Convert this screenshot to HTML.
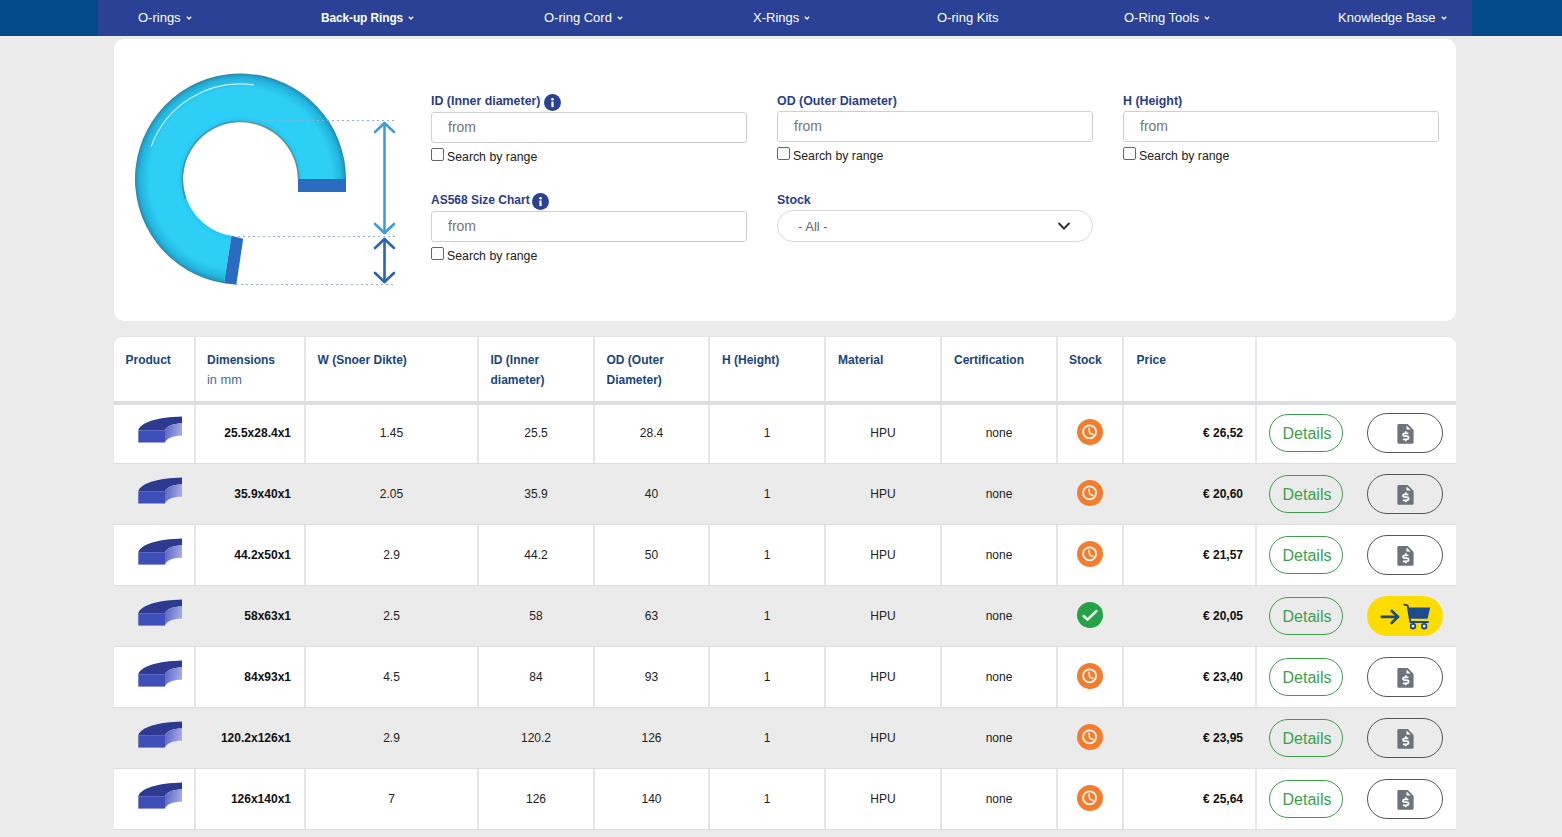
<!DOCTYPE html>
<html><head><meta charset="utf-8">
<style>
*{box-sizing:border-box;margin:0;padding:0}
html,body{width:1562px;height:837px;overflow:hidden;background:#ebebeb;font-family:"Liberation Sans",sans-serif;position:relative}
.abs{position:absolute}
#nav{position:absolute;left:0;top:0;width:1562px;height:36px;background:#044a8a}
#navin{position:absolute;left:98px;top:0;width:1374px;height:36px;background:#2a4196}
.ni{position:absolute;top:10px;color:#fff;font-size:13px;line-height:15px;white-space:nowrap}
.ni.b{font-weight:bold;letter-spacing:-0.1px}
.sx{display:inline-block;transform:scaleX(0.915);transform-origin:0 50%}
.chev{display:inline-block;width:6px;height:4px;margin-left:5px;vertical-align:2px}
#panel{position:absolute;left:114px;top:39px;width:1342px;height:282px;background:#fff;border-radius:10px}
.lbl{position:absolute;color:#283d8c;font-weight:bold;font-size:12.4px;line-height:14px;white-space:nowrap}
.info{position:absolute;width:17px;height:17px;border-radius:50%;background:#2a4196}
.inp{position:absolute;height:31px;width:316px;border:1px solid #cfcfcf;border-radius:3px;background:#fff}
.ph{position:absolute;left:16px;top:6px;color:#757575;font-size:14px;line-height:16px}
.cb{position:absolute;width:13px;height:13px;border:1px solid #666;border-radius:2px;background:#fff}
.sbr{position:absolute;color:#222;font-size:12.3px;line-height:14px;white-space:nowrap}
#sel{position:absolute;left:777px;top:210px;width:316px;height:32px;border:1px solid #d9d9d9;border-radius:16px;background:#fff}
#table{position:absolute;left:114px;top:337px;width:1342px;height:493px;background:#fff;border-radius:8px 8px 0 0;overflow:hidden;box-shadow:0 -1px 0 #e2e2e2}
.th{position:absolute;color:#17467f;font-weight:bold;font-size:12px;line-height:20px;white-space:nowrap}
.vl{position:absolute;width:2px;background:#e6e6e6}
.row{position:absolute;left:0;width:1342px;height:61px}
.row.alt{background:#ebebeb}
.td{position:absolute;color:#222;font-size:12px;line-height:14px;white-space:nowrap;text-align:center}
.tdb{position:absolute;color:#111;font-weight:bold;font-size:12px;line-height:14px;white-space:nowrap;text-align:right}
.det{position:absolute;width:74px;height:38px;border:1px solid #3b9e4b;border-radius:19px;color:#3aa24c;font-size:16px;line-height:38px;text-align:center;text-indent:2px}
.quo{position:absolute;width:76px;height:40px;border:1px solid #555;border-radius:20px}
.cart{position:absolute;width:76px;height:40px;border-radius:20px;background:#fddc00}
.clk{position:absolute;width:26px;height:26px;border-radius:50%;background:#f47c2e}
.chk{position:absolute;width:26px;height:26px;border-radius:50%;background:#25a146}
</style></head><body>
<div id="nav"><div id="navin"></div></div>
<div class="ni" style="left:138px">O-rings<svg class="chev" viewBox="0 0 6 4"><path d="M0.8,0.8 L3,3 L5.2,0.8" fill="none" stroke="#fff" stroke-width="1.25"/></svg></div>
<div class="ni b" style="left:321px"><span class="sx">Back-up Rings</span></div>
<div class="ni" style="left:403px"><svg class="chev" viewBox="0 0 6 4"><path d="M0.8,0.8 L3,3 L5.2,0.8" fill="none" stroke="#fff" stroke-width="1.25"/></svg></div>
<div class="ni" style="left:544px">O-ring Cord<svg class="chev" viewBox="0 0 6 4"><path d="M0.8,0.8 L3,3 L5.2,0.8" fill="none" stroke="#fff" stroke-width="1.25"/></svg></div>
<div class="ni" style="left:753px">X-Rings<svg class="chev" viewBox="0 0 6 4"><path d="M0.8,0.8 L3,3 L5.2,0.8" fill="none" stroke="#fff" stroke-width="1.25"/></svg></div>
<div class="ni" style="left:937px">O-ring Kits</div>
<div class="ni" style="left:1124px">O-Ring Tools<svg class="chev" viewBox="0 0 6 4"><path d="M0.8,0.8 L3,3 L5.2,0.8" fill="none" stroke="#fff" stroke-width="1.25"/></svg></div>
<div class="ni" style="left:1338px">Knowledge Base<svg class="chev" viewBox="0 0 6 4"><path d="M0.8,0.8 L3,3 L5.2,0.8" fill="none" stroke="#fff" stroke-width="1.25"/></svg></div>
<div id="panel"></div>
<svg class="abs" style="left:0;top:0" width="420" height="320" viewBox="0 0 420 320">
<defs>
<radialGradient id="rg" cx="240.5" cy="179" r="105.5" gradientUnits="userSpaceOnUse">
<stop offset="0.545" stop-color="#28c4ee"/>
<stop offset="0.60" stop-color="#2ccff6"/>
<stop offset="0.86" stop-color="#2ecff5"/>
<stop offset="0.95" stop-color="#23b6df"/>
<stop offset="0.985" stop-color="#1d9cc6"/>
<stop offset="1" stop-color="#3a7d96"/>
</radialGradient>
</defs>
<path d="M346,179 A105.5,105.5 0 1,0 224,283.2 L231.5,235.8 A57.5,57.5 0 1,1 298,179 Z" fill="url(#rg)"/>
<path d="M151.2,146.5 A95,95 0 0,1 253.7,84.9" fill="none" stroke="#d8f6fd" stroke-width="1.1" opacity="0.9"/>
<path d="M185.5,199 A58.2,58.2 0 1,1 298.6,179" fill="none" stroke="#4f7f92" stroke-width="1.6" opacity="0.75"/>
<rect x="298" y="179" width="48" height="13" fill="#2a6cc0"/>
<polygon points="231.5,235.8 224,283.2 236.3,284.8 243.2,238.7" fill="#2a6cc0"/>
<line x1="262" y1="120.5" x2="395" y2="120.5" stroke="#8fb0cc" stroke-width="1" stroke-dasharray="2,3"/>
<line x1="238" y1="236.5" x2="395" y2="236.5" stroke="#8fb0cc" stroke-width="1" stroke-dasharray="2,3"/>
<line x1="236" y1="284.5" x2="395" y2="284.5" stroke="#8fb0cc" stroke-width="1" stroke-dasharray="2,3"/>
<g fill="none" stroke="#3b9de0" stroke-width="2.6" stroke-linecap="round" stroke-linejoin="round">
<path d="M384.5,123 L384.5,233"/><path d="M375,132 L384.5,123 L394,132"/><path d="M375,224 L384.5,233 L394,224"/>
</g>
<g fill="none" stroke="#2566b5" stroke-width="2.6" stroke-linecap="round" stroke-linejoin="round">
<path d="M384.5,239 L384.5,282"/><path d="M375,248 L384.5,239 L394,248"/><path d="M375,273 L384.5,282 L394,273"/>
</g>
</svg>
<div class="lbl" style="left:431px;top:94px">ID (Inner diameter)</div>
<div class="info" style="left:544px;top:94px"><svg width="17" height="17" viewBox="0 0 17 17"><circle cx="8.5" cy="5.2" r="1.3" fill="#fff"/><rect x="7.4" y="7.5" width="2.2" height="5.6" fill="#fff"/></svg></div>
<div class="lbl" style="left:777px;top:94px">OD (Outer Diameter)</div>
<div class="lbl" style="left:1123px;top:94px">H (Height)</div>
<div class="lbl" style="left:431px;top:193px;font-size:12px">AS568 Size Chart</div>
<div class="info" style="left:532px;top:193px"><svg width="17" height="17" viewBox="0 0 17 17"><circle cx="8.5" cy="5.2" r="1.3" fill="#fff"/><rect x="7.4" y="7.5" width="2.2" height="5.6" fill="#fff"/></svg></div>
<div class="lbl" style="left:777px;top:193px;font-size:12.4px">Stock</div>
<div class="inp" style="left:431px;top:112px"><div class="ph">from</div></div>
<div class="inp" style="left:777px;top:111px"><div class="ph">from</div></div>
<div class="inp" style="left:1123px;top:111px"><div class="ph">from</div></div>
<div class="inp" style="left:431px;top:211px"><div class="ph">from</div></div>
<div class="cb" style="left:431px;top:148px"></div>
<div class="sbr" style="left:447px;top:150px">Search by range</div>
<div class="cb" style="left:777px;top:147px"></div>
<div class="sbr" style="left:793px;top:149px">Search by range</div>
<div class="cb" style="left:1123px;top:147px"></div>
<div class="sbr" style="left:1139px;top:149px">Search by range</div>
<div class="cb" style="left:431px;top:247px"></div>
<div class="sbr" style="left:447px;top:249px">Search by range</div>
<div id="sel"><div class="ph" style="left:20px;top:8px;font-size:13px;color:#666">- All -</div><svg class="abs" style="left:279px;top:10px" width="14" height="10" viewBox="0 0 14 10"><path d="M1.5,2 L7,7.5 L12.5,2" fill="none" stroke="#333" stroke-width="2"/></svg></div>
<div id="table"><div class="th" style="left:11.5px;top:13px">Product</div><div class="th" style="left:93px;top:13px">Dimensions</div><div class="th" style="left:203.5px;top:13px">W (Snoer Dikte)</div><div class="th" style="left:376.5px;top:13px">ID (Inner<br>diameter)</div><div class="th" style="left:492.5px;top:13px">OD (Outer<br>Diameter)</div><div class="th" style="left:608px;top:13px">H (Height)</div><div class="th" style="left:724px;top:13px">Material</div><div class="th" style="left:840px;top:13px">Certification</div><div class="th" style="left:955px;top:13px">Stock</div><div class="th" style="left:1022.5px;top:13px">Price</div><div class="th" style="left:93px;top:33px;font-weight:normal;font-size:12.8px;color:#4a6d9c">in mm</div><div class="vl" style="left:80px;top:0;height:64px"></div><div class="vl" style="left:190px;top:0;height:64px"></div><div class="vl" style="left:363px;top:0;height:64px"></div><div class="vl" style="left:479px;top:0;height:64px"></div><div class="vl" style="left:594px;top:0;height:64px"></div><div class="vl" style="left:710px;top:0;height:64px"></div><div class="vl" style="left:826px;top:0;height:64px"></div><div class="vl" style="left:942px;top:0;height:64px"></div><div class="vl" style="left:1008px;top:0;height:64px"></div><div class="vl" style="left:1141px;top:0;height:64px"></div><div class="row" style="top:66px"><svg class="abs" style="left:24px;top:13px" width="45" height="28" viewBox="0 0 45 28">
<defs><linearGradient id="ig0" x1="0" y1="0" x2="1" y2="0.2"><stop offset="0" stop-color="#5664c2"/><stop offset="1" stop-color="#a3aae3"/></linearGradient></defs>
<path d="M0.3,14.2 C3,6 20,1 44,0.5 L44,7.5 C35,7.5 28.5,10 27,14.2 Z" fill="#2d3a90"/>
<path d="M0.3,14.2 L27,14.2 L27,26.6 L0.3,26.6 Z" fill="#3e4fb9"/>
<path d="M27,14.2 C28.5,10 35,7.5 44,7.5 L44,19.8 C35,19.8 28.5,22.3 27,26.6 Z" fill="url(#ig0)"/>
</svg><div class="tdb" style="right:1165px;top:23px">25.5x28.4x1</div><div class="td" style="left:191px;width:173px;top:23px">1.45</div><div class="td" style="left:364px;width:116px;top:23px">25.5</div><div class="td" style="left:480px;width:115px;top:23px">28.4</div><div class="td" style="left:595px;width:116px;top:23px">1</div><div class="td" style="left:711px;width:116px;top:23px">HPU</div><div class="td" style="left:827px;width:116px;top:23px">none</div><div class="clk" style="left:963px;top:16px"><svg width="26" height="26" viewBox="0 0 26 26"><circle cx="12.6" cy="12.8" r="6.5" fill="none" stroke="#fff8ec" stroke-width="1.8"/><path d="M12.1,9.3 L12.6,14 L16,15.5" fill="none" stroke="#fff8ec" stroke-width="1.5" stroke-linecap="round" stroke-linejoin="round"/></svg></div><div class="tdb" style="right:213px;top:23px">€ 26,52</div><div class="det" style="left:1155px;top:11px">Details</div><div class="quo" style="left:1253px;top:10px"><svg class="abs" style="left:29px;top:9px" width="18" height="22" viewBox="0 0 18 22"><path d="M1.6,1 L10.8,1 L16.6,6.9 L16.6,19.2 Q16.6,20.7 15.1,20.7 L1.9,20.7 Q0.4,20.7 0.4,19.2 L0.4,2.4 Q0.4,1 1.6,1 Z" fill="#6c737b"/><path d="M9.5,2.4 L9.5,6.6 L13.7,6.6 Z" fill="#fff"/><path d="M11.4,10.3 L8.1,10.3 Q6,10.3 6,11.8 Q6,13.2 8.1,13.2 L9.4,13.2 Q11.6,13.2 11.6,14.8 Q11.6,16.3 9.4,16.3 L5.9,16.3" fill="none" stroke="#fff" stroke-width="1.7"/><path d="M8.8,8.2 L8.8,10.4 M8.8,16.2 L8.8,18.2" stroke="#fff" stroke-width="1.7"/></svg></div><div class="vl" style="left:80px;top:0;height:60px"></div><div class="vl" style="left:190px;top:0;height:60px"></div><div class="vl" style="left:363px;top:0;height:60px"></div><div class="vl" style="left:479px;top:0;height:60px"></div><div class="vl" style="left:594px;top:0;height:60px"></div><div class="vl" style="left:710px;top:0;height:60px"></div><div class="vl" style="left:826px;top:0;height:60px"></div><div class="vl" style="left:942px;top:0;height:60px"></div><div class="vl" style="left:1008px;top:0;height:60px"></div><div class="vl" style="left:1141px;top:0;height:60px"></div><div class="abs" style="left:0;top:60px;width:1342px;height:1px;background:#dedede"></div></div><div class="row alt" style="top:127px"><svg class="abs" style="left:24px;top:13px" width="45" height="28" viewBox="0 0 45 28">
<defs><linearGradient id="ig1" x1="0" y1="0" x2="1" y2="0.2"><stop offset="0" stop-color="#5664c2"/><stop offset="1" stop-color="#a3aae3"/></linearGradient></defs>
<path d="M0.3,14.2 C3,6 20,1 44,0.5 L44,7.5 C35,7.5 28.5,10 27,14.2 Z" fill="#2d3a90"/>
<path d="M0.3,14.2 L27,14.2 L27,26.6 L0.3,26.6 Z" fill="#3e4fb9"/>
<path d="M27,14.2 C28.5,10 35,7.5 44,7.5 L44,19.8 C35,19.8 28.5,22.3 27,26.6 Z" fill="url(#ig1)"/>
</svg><div class="tdb" style="right:1165px;top:23px">35.9x40x1</div><div class="td" style="left:191px;width:173px;top:23px">2.05</div><div class="td" style="left:364px;width:116px;top:23px">35.9</div><div class="td" style="left:480px;width:115px;top:23px">40</div><div class="td" style="left:595px;width:116px;top:23px">1</div><div class="td" style="left:711px;width:116px;top:23px">HPU</div><div class="td" style="left:827px;width:116px;top:23px">none</div><div class="clk" style="left:963px;top:16px"><svg width="26" height="26" viewBox="0 0 26 26"><circle cx="12.6" cy="12.8" r="6.5" fill="none" stroke="#fff8ec" stroke-width="1.8"/><path d="M12.1,9.3 L12.6,14 L16,15.5" fill="none" stroke="#fff8ec" stroke-width="1.5" stroke-linecap="round" stroke-linejoin="round"/></svg></div><div class="tdb" style="right:213px;top:23px">€ 20,60</div><div class="det" style="left:1155px;top:11px">Details</div><div class="quo" style="left:1253px;top:10px"><svg class="abs" style="left:29px;top:9px" width="18" height="22" viewBox="0 0 18 22"><path d="M1.6,1 L10.8,1 L16.6,6.9 L16.6,19.2 Q16.6,20.7 15.1,20.7 L1.9,20.7 Q0.4,20.7 0.4,19.2 L0.4,2.4 Q0.4,1 1.6,1 Z" fill="#6c737b"/><path d="M9.5,2.4 L9.5,6.6 L13.7,6.6 Z" fill="#fff"/><path d="M11.4,10.3 L8.1,10.3 Q6,10.3 6,11.8 Q6,13.2 8.1,13.2 L9.4,13.2 Q11.6,13.2 11.6,14.8 Q11.6,16.3 9.4,16.3 L5.9,16.3" fill="none" stroke="#fff" stroke-width="1.7"/><path d="M8.8,8.2 L8.8,10.4 M8.8,16.2 L8.8,18.2" stroke="#fff" stroke-width="1.7"/></svg></div><div class="abs" style="left:0;top:60px;width:1342px;height:1px;background:#dedede"></div></div><div class="row" style="top:188px"><svg class="abs" style="left:24px;top:13px" width="45" height="28" viewBox="0 0 45 28">
<defs><linearGradient id="ig2" x1="0" y1="0" x2="1" y2="0.2"><stop offset="0" stop-color="#5664c2"/><stop offset="1" stop-color="#a3aae3"/></linearGradient></defs>
<path d="M0.3,14.2 C3,6 20,1 44,0.5 L44,7.5 C35,7.5 28.5,10 27,14.2 Z" fill="#2d3a90"/>
<path d="M0.3,14.2 L27,14.2 L27,26.6 L0.3,26.6 Z" fill="#3e4fb9"/>
<path d="M27,14.2 C28.5,10 35,7.5 44,7.5 L44,19.8 C35,19.8 28.5,22.3 27,26.6 Z" fill="url(#ig2)"/>
</svg><div class="tdb" style="right:1165px;top:23px">44.2x50x1</div><div class="td" style="left:191px;width:173px;top:23px">2.9</div><div class="td" style="left:364px;width:116px;top:23px">44.2</div><div class="td" style="left:480px;width:115px;top:23px">50</div><div class="td" style="left:595px;width:116px;top:23px">1</div><div class="td" style="left:711px;width:116px;top:23px">HPU</div><div class="td" style="left:827px;width:116px;top:23px">none</div><div class="clk" style="left:963px;top:16px"><svg width="26" height="26" viewBox="0 0 26 26"><circle cx="12.6" cy="12.8" r="6.5" fill="none" stroke="#fff8ec" stroke-width="1.8"/><path d="M12.1,9.3 L12.6,14 L16,15.5" fill="none" stroke="#fff8ec" stroke-width="1.5" stroke-linecap="round" stroke-linejoin="round"/></svg></div><div class="tdb" style="right:213px;top:23px">€ 21,57</div><div class="det" style="left:1155px;top:11px">Details</div><div class="quo" style="left:1253px;top:10px"><svg class="abs" style="left:29px;top:9px" width="18" height="22" viewBox="0 0 18 22"><path d="M1.6,1 L10.8,1 L16.6,6.9 L16.6,19.2 Q16.6,20.7 15.1,20.7 L1.9,20.7 Q0.4,20.7 0.4,19.2 L0.4,2.4 Q0.4,1 1.6,1 Z" fill="#6c737b"/><path d="M9.5,2.4 L9.5,6.6 L13.7,6.6 Z" fill="#fff"/><path d="M11.4,10.3 L8.1,10.3 Q6,10.3 6,11.8 Q6,13.2 8.1,13.2 L9.4,13.2 Q11.6,13.2 11.6,14.8 Q11.6,16.3 9.4,16.3 L5.9,16.3" fill="none" stroke="#fff" stroke-width="1.7"/><path d="M8.8,8.2 L8.8,10.4 M8.8,16.2 L8.8,18.2" stroke="#fff" stroke-width="1.7"/></svg></div><div class="vl" style="left:80px;top:0;height:60px"></div><div class="vl" style="left:190px;top:0;height:60px"></div><div class="vl" style="left:363px;top:0;height:60px"></div><div class="vl" style="left:479px;top:0;height:60px"></div><div class="vl" style="left:594px;top:0;height:60px"></div><div class="vl" style="left:710px;top:0;height:60px"></div><div class="vl" style="left:826px;top:0;height:60px"></div><div class="vl" style="left:942px;top:0;height:60px"></div><div class="vl" style="left:1008px;top:0;height:60px"></div><div class="vl" style="left:1141px;top:0;height:60px"></div><div class="abs" style="left:0;top:60px;width:1342px;height:1px;background:#dedede"></div></div><div class="row alt" style="top:249px"><svg class="abs" style="left:24px;top:13px" width="45" height="28" viewBox="0 0 45 28">
<defs><linearGradient id="ig3" x1="0" y1="0" x2="1" y2="0.2"><stop offset="0" stop-color="#5664c2"/><stop offset="1" stop-color="#a3aae3"/></linearGradient></defs>
<path d="M0.3,14.2 C3,6 20,1 44,0.5 L44,7.5 C35,7.5 28.5,10 27,14.2 Z" fill="#2d3a90"/>
<path d="M0.3,14.2 L27,14.2 L27,26.6 L0.3,26.6 Z" fill="#3e4fb9"/>
<path d="M27,14.2 C28.5,10 35,7.5 44,7.5 L44,19.8 C35,19.8 28.5,22.3 27,26.6 Z" fill="url(#ig3)"/>
</svg><div class="tdb" style="right:1165px;top:23px">58x63x1</div><div class="td" style="left:191px;width:173px;top:23px">2.5</div><div class="td" style="left:364px;width:116px;top:23px">58</div><div class="td" style="left:480px;width:115px;top:23px">63</div><div class="td" style="left:595px;width:116px;top:23px">1</div><div class="td" style="left:711px;width:116px;top:23px">HPU</div><div class="td" style="left:827px;width:116px;top:23px">none</div><div class="chk" style="left:963px;top:16px"><svg width="26" height="26" viewBox="0 0 26 26"><path d="M6.6,14 L10.5,17.6 L19.3,9.2" fill="none" stroke="#fff" stroke-width="2.5" stroke-linecap="round" stroke-linejoin="round"/></svg></div><div class="tdb" style="right:213px;top:23px">€ 20,05</div><div class="det" style="left:1155px;top:11px">Details</div><div class="cart" style="left:1253px;top:10px"><svg class="abs" style="left:6px;top:6px" width="64" height="28" viewBox="0 0 64 28">
<g fill="none" stroke="#1c4884" stroke-width="2.6" stroke-linecap="round" stroke-linejoin="round">
<path d="M8.8,14.9 L25,14.9"/><path d="M18.6,8.8 L25,14.9 L18.6,21"/>
</g>
<g fill="none" stroke="#1c4884" stroke-width="1.9" stroke-linecap="round" stroke-linejoin="round">
<path d="M31.2,2.6 L34.6,3.4 L37.4,20 L55,20"/>
</g>
<path d="M35.2,5.6 L57.2,5.6 L54.5,16.8 L37.3,16.8 Z" fill="#1c4c90"/>
<circle cx="40" cy="24.2" r="2.3" fill="#eef" stroke="#1c4884" stroke-width="1.8"/>
<circle cx="51.2" cy="24.2" r="2.3" fill="#eef" stroke="#1c4884" stroke-width="1.8"/>
</svg></div><div class="abs" style="left:0;top:60px;width:1342px;height:1px;background:#dedede"></div></div><div class="row" style="top:310px"><svg class="abs" style="left:24px;top:13px" width="45" height="28" viewBox="0 0 45 28">
<defs><linearGradient id="ig4" x1="0" y1="0" x2="1" y2="0.2"><stop offset="0" stop-color="#5664c2"/><stop offset="1" stop-color="#a3aae3"/></linearGradient></defs>
<path d="M0.3,14.2 C3,6 20,1 44,0.5 L44,7.5 C35,7.5 28.5,10 27,14.2 Z" fill="#2d3a90"/>
<path d="M0.3,14.2 L27,14.2 L27,26.6 L0.3,26.6 Z" fill="#3e4fb9"/>
<path d="M27,14.2 C28.5,10 35,7.5 44,7.5 L44,19.8 C35,19.8 28.5,22.3 27,26.6 Z" fill="url(#ig4)"/>
</svg><div class="tdb" style="right:1165px;top:23px">84x93x1</div><div class="td" style="left:191px;width:173px;top:23px">4.5</div><div class="td" style="left:364px;width:116px;top:23px">84</div><div class="td" style="left:480px;width:115px;top:23px">93</div><div class="td" style="left:595px;width:116px;top:23px">1</div><div class="td" style="left:711px;width:116px;top:23px">HPU</div><div class="td" style="left:827px;width:116px;top:23px">none</div><div class="clk" style="left:963px;top:16px"><svg width="26" height="26" viewBox="0 0 26 26"><circle cx="12.6" cy="12.8" r="6.5" fill="none" stroke="#fff8ec" stroke-width="1.8"/><path d="M12.1,9.3 L12.6,14 L16,15.5" fill="none" stroke="#fff8ec" stroke-width="1.5" stroke-linecap="round" stroke-linejoin="round"/></svg></div><div class="tdb" style="right:213px;top:23px">€ 23,40</div><div class="det" style="left:1155px;top:11px">Details</div><div class="quo" style="left:1253px;top:10px"><svg class="abs" style="left:29px;top:9px" width="18" height="22" viewBox="0 0 18 22"><path d="M1.6,1 L10.8,1 L16.6,6.9 L16.6,19.2 Q16.6,20.7 15.1,20.7 L1.9,20.7 Q0.4,20.7 0.4,19.2 L0.4,2.4 Q0.4,1 1.6,1 Z" fill="#6c737b"/><path d="M9.5,2.4 L9.5,6.6 L13.7,6.6 Z" fill="#fff"/><path d="M11.4,10.3 L8.1,10.3 Q6,10.3 6,11.8 Q6,13.2 8.1,13.2 L9.4,13.2 Q11.6,13.2 11.6,14.8 Q11.6,16.3 9.4,16.3 L5.9,16.3" fill="none" stroke="#fff" stroke-width="1.7"/><path d="M8.8,8.2 L8.8,10.4 M8.8,16.2 L8.8,18.2" stroke="#fff" stroke-width="1.7"/></svg></div><div class="vl" style="left:80px;top:0;height:60px"></div><div class="vl" style="left:190px;top:0;height:60px"></div><div class="vl" style="left:363px;top:0;height:60px"></div><div class="vl" style="left:479px;top:0;height:60px"></div><div class="vl" style="left:594px;top:0;height:60px"></div><div class="vl" style="left:710px;top:0;height:60px"></div><div class="vl" style="left:826px;top:0;height:60px"></div><div class="vl" style="left:942px;top:0;height:60px"></div><div class="vl" style="left:1008px;top:0;height:60px"></div><div class="vl" style="left:1141px;top:0;height:60px"></div><div class="abs" style="left:0;top:60px;width:1342px;height:1px;background:#dedede"></div></div><div class="row alt" style="top:371px"><svg class="abs" style="left:24px;top:13px" width="45" height="28" viewBox="0 0 45 28">
<defs><linearGradient id="ig5" x1="0" y1="0" x2="1" y2="0.2"><stop offset="0" stop-color="#5664c2"/><stop offset="1" stop-color="#a3aae3"/></linearGradient></defs>
<path d="M0.3,14.2 C3,6 20,1 44,0.5 L44,7.5 C35,7.5 28.5,10 27,14.2 Z" fill="#2d3a90"/>
<path d="M0.3,14.2 L27,14.2 L27,26.6 L0.3,26.6 Z" fill="#3e4fb9"/>
<path d="M27,14.2 C28.5,10 35,7.5 44,7.5 L44,19.8 C35,19.8 28.5,22.3 27,26.6 Z" fill="url(#ig5)"/>
</svg><div class="tdb" style="right:1165px;top:23px">120.2x126x1</div><div class="td" style="left:191px;width:173px;top:23px">2.9</div><div class="td" style="left:364px;width:116px;top:23px">120.2</div><div class="td" style="left:480px;width:115px;top:23px">126</div><div class="td" style="left:595px;width:116px;top:23px">1</div><div class="td" style="left:711px;width:116px;top:23px">HPU</div><div class="td" style="left:827px;width:116px;top:23px">none</div><div class="clk" style="left:963px;top:16px"><svg width="26" height="26" viewBox="0 0 26 26"><circle cx="12.6" cy="12.8" r="6.5" fill="none" stroke="#fff8ec" stroke-width="1.8"/><path d="M12.1,9.3 L12.6,14 L16,15.5" fill="none" stroke="#fff8ec" stroke-width="1.5" stroke-linecap="round" stroke-linejoin="round"/></svg></div><div class="tdb" style="right:213px;top:23px">€ 23,95</div><div class="det" style="left:1155px;top:11px">Details</div><div class="quo" style="left:1253px;top:10px"><svg class="abs" style="left:29px;top:9px" width="18" height="22" viewBox="0 0 18 22"><path d="M1.6,1 L10.8,1 L16.6,6.9 L16.6,19.2 Q16.6,20.7 15.1,20.7 L1.9,20.7 Q0.4,20.7 0.4,19.2 L0.4,2.4 Q0.4,1 1.6,1 Z" fill="#6c737b"/><path d="M9.5,2.4 L9.5,6.6 L13.7,6.6 Z" fill="#fff"/><path d="M11.4,10.3 L8.1,10.3 Q6,10.3 6,11.8 Q6,13.2 8.1,13.2 L9.4,13.2 Q11.6,13.2 11.6,14.8 Q11.6,16.3 9.4,16.3 L5.9,16.3" fill="none" stroke="#fff" stroke-width="1.7"/><path d="M8.8,8.2 L8.8,10.4 M8.8,16.2 L8.8,18.2" stroke="#fff" stroke-width="1.7"/></svg></div><div class="abs" style="left:0;top:60px;width:1342px;height:1px;background:#dedede"></div></div><div class="row" style="top:432px"><svg class="abs" style="left:24px;top:13px" width="45" height="28" viewBox="0 0 45 28">
<defs><linearGradient id="ig6" x1="0" y1="0" x2="1" y2="0.2"><stop offset="0" stop-color="#5664c2"/><stop offset="1" stop-color="#a3aae3"/></linearGradient></defs>
<path d="M0.3,14.2 C3,6 20,1 44,0.5 L44,7.5 C35,7.5 28.5,10 27,14.2 Z" fill="#2d3a90"/>
<path d="M0.3,14.2 L27,14.2 L27,26.6 L0.3,26.6 Z" fill="#3e4fb9"/>
<path d="M27,14.2 C28.5,10 35,7.5 44,7.5 L44,19.8 C35,19.8 28.5,22.3 27,26.6 Z" fill="url(#ig6)"/>
</svg><div class="tdb" style="right:1165px;top:23px">126x140x1</div><div class="td" style="left:191px;width:173px;top:23px">7</div><div class="td" style="left:364px;width:116px;top:23px">126</div><div class="td" style="left:480px;width:115px;top:23px">140</div><div class="td" style="left:595px;width:116px;top:23px">1</div><div class="td" style="left:711px;width:116px;top:23px">HPU</div><div class="td" style="left:827px;width:116px;top:23px">none</div><div class="clk" style="left:963px;top:16px"><svg width="26" height="26" viewBox="0 0 26 26"><circle cx="12.6" cy="12.8" r="6.5" fill="none" stroke="#fff8ec" stroke-width="1.8"/><path d="M12.1,9.3 L12.6,14 L16,15.5" fill="none" stroke="#fff8ec" stroke-width="1.5" stroke-linecap="round" stroke-linejoin="round"/></svg></div><div class="tdb" style="right:213px;top:23px">€ 25,64</div><div class="det" style="left:1155px;top:11px">Details</div><div class="quo" style="left:1253px;top:10px"><svg class="abs" style="left:29px;top:9px" width="18" height="22" viewBox="0 0 18 22"><path d="M1.6,1 L10.8,1 L16.6,6.9 L16.6,19.2 Q16.6,20.7 15.1,20.7 L1.9,20.7 Q0.4,20.7 0.4,19.2 L0.4,2.4 Q0.4,1 1.6,1 Z" fill="#6c737b"/><path d="M9.5,2.4 L9.5,6.6 L13.7,6.6 Z" fill="#fff"/><path d="M11.4,10.3 L8.1,10.3 Q6,10.3 6,11.8 Q6,13.2 8.1,13.2 L9.4,13.2 Q11.6,13.2 11.6,14.8 Q11.6,16.3 9.4,16.3 L5.9,16.3" fill="none" stroke="#fff" stroke-width="1.7"/><path d="M8.8,8.2 L8.8,10.4 M8.8,16.2 L8.8,18.2" stroke="#fff" stroke-width="1.7"/></svg></div><div class="vl" style="left:80px;top:0;height:60px"></div><div class="vl" style="left:190px;top:0;height:60px"></div><div class="vl" style="left:363px;top:0;height:60px"></div><div class="vl" style="left:479px;top:0;height:60px"></div><div class="vl" style="left:594px;top:0;height:60px"></div><div class="vl" style="left:710px;top:0;height:60px"></div><div class="vl" style="left:826px;top:0;height:60px"></div><div class="vl" style="left:942px;top:0;height:60px"></div><div class="vl" style="left:1008px;top:0;height:60px"></div><div class="vl" style="left:1141px;top:0;height:60px"></div><div class="abs" style="left:0;top:60px;width:1342px;height:1px;background:#dedede"></div></div><div class="abs" style="left:0;top:64px;width:1342px;height:4px;background:#dcdee2"></div></div>
</body></html>
